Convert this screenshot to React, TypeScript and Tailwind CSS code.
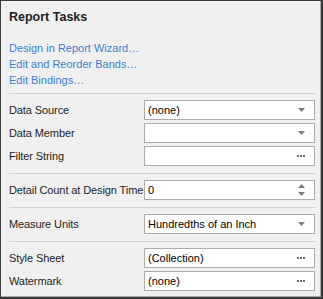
import React from 'react'

// Report Tasks smart-tag panel
const font = { fontFamily: '"Liberation Sans", Arial, sans-serif' }

function Arrow() {
    return (
        <svg width="7" height="4" viewBox="0 0 7 4" className="shrink-0">
            <path d="M0 0H7L3.5 4Z" fill="#7b7b7b" />
        </svg>
    )
}

function Dots() {
    return (
        <div className="flex gap-[1px] shrink-0">
            <span className="w-[2px] h-[2px] bg-[#6e6e6e]" />
            <span className="w-[2px] h-[2px] bg-[#6e6e6e]" />
            <span className="w-[2px] h-[2px] bg-[#6e6e6e]" />
        </div>
    )
}

function Spin() {
    return (
        <div className="flex flex-col gap-[4px] shrink-0">
            <svg width="7" height="4" viewBox="0 0 7 4">
                <path d="M0 4H7L3.5 0Z" fill="#7b7b7b" />
            </svg>
            <svg width="7" height="4" viewBox="0 0 7 4">
                <path d="M0 0H7L3.5 4Z" fill="#7b7b7b" />
            </svg>
        </div>
    )
}

function Field({ label, value, kind }: { label: string; value?: string; kind: 'drop' | 'dots' | 'spin' }) {
    return (
        <div className="flex items-center h-[20px]">
            <div className="w-[135px] shrink-0 text-[#1e1e1e] whitespace-nowrap tracking-[-0.1px]">{label}</div>
            <div className="flex-1 h-[20px] bg-white border border-[#acacac] flex items-center pl-[3px] pr-[9px]">
                <span className="flex-1 text-black whitespace-nowrap overflow-hidden">{value}</span>
                {kind === 'drop' && <Arrow />}
                {kind === 'dots' && <Dots />}
                {kind === 'spin' && <Spin />}
            </div>
        </div>
    )
}

function Sep({ top = 'mt-[7px]' }: { top?: string }) {
    return <div className={`h-px bg-[#cfcfcf] ${top} mb-[6px]`} />
}

export default function App() {
    return (
        <div className="w-[323px] h-[299px] bg-[#3a3a3a] pt-px pl-px pr-[2px] pb-[2px]" style={font}>
            <div className="w-full h-full bg-[#f0f0f0] border-r border-b border-[#a8a8a8] pl-[8px] pr-[5px] text-[11px] leading-[16px]">
                <div className="pt-[8px] font-bold text-[12.5px] text-[#1e1e1e]">Report Tasks</div>
                <div className="mt-[15px] flex flex-col text-[#3c7fd0]">
                    <span>Design in Report Wizard…</span>
                    <span>Edit and Reorder Bands…</span>
                    <span>Edit Bindings…</span>
                </div>
                <Sep top="mt-[5px]" />
                <div className="flex flex-col gap-[3px]">
                    <Field label="Data Source" value="(none)" kind="drop" />
                    <Field label="Data Member" kind="drop" />
                    <Field label="Filter String" kind="dots" />
                </div>
                <Sep />
                <Field label="Detail Count at Design Time" value="0" kind="spin" />
                <Sep />
                <Field label="Measure Units" value="Hundredths of an Inch" kind="drop" />
                <Sep />
                <div className="flex flex-col gap-[3px]">
                    <Field label="Style Sheet" value="(Collection)" kind="dots" />
                    <Field label="Watermark" value="(none)" kind="dots" />
                </div>
            </div>
        </div>
    )
}
